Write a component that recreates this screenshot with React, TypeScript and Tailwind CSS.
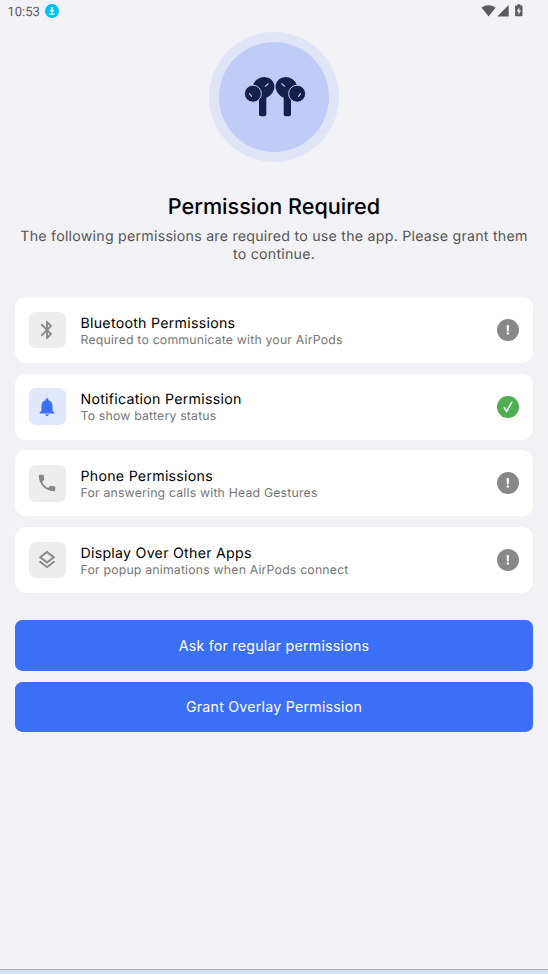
import { MdBluetooth, MdNotifications, MdOutlineLayers, MdPhone } from 'react-icons/md';

const permissions = [
  {
    title: 'Bluetooth Permissions',
    description: 'Required to communicate with your AirPods',
    icon: MdBluetooth,
    granted: false,
  },
  {
    title: 'Notification Permission',
    description: 'To show battery status',
    icon: MdNotifications,
    granted: true,
  },
  {
    title: 'Phone Permissions',
    description: 'For answering calls with Head Gestures',
    icon: MdPhone,
    granted: false,
  },
  {
    title: 'Display Over Other Apps',
    description: 'For popup animations when AirPods connect',
    icon: MdOutlineLayers,
    granted: false,
  },
];

const StatusBar = () => {
  return (
    <div className="flex h-[22px] items-center justify-between pl-[7.5px] pr-6 text-[#5c5c60]">
      <div className="flex items-center gap-[5px]">
        <span className="w-[32.5px] pt-0.5 font-[Roboto] text-[13px] font-normal leading-[21px]">10:53</span>
        <svg className="size-[14px]" viewBox="0 0 14 14">
          <circle cx="7" cy="7" r="7" fill="#00bfff" />
          <path d="M6.2 3h1.6v3.2h1.8L7 9 4.4 6.2h1.8z" fill="#fff" />
          <path d="M4.3 10.1h5.4" stroke="#fff" strokeWidth="1.2" />
        </svg>
      </div>
      <svg className="h-[14px] w-[43px]" viewBox="0 0 43 14" fill="currentColor">
        <path d="M.5 3.6C4.5.3 10.700.3 14.700 3.600L7.600 12.400z" />
        <path d="M27.700 1v11.400H16.200z" />
        <path d="M35.100 1.400h1.200V.2h3v1.200h1.300q.9 0 .9.800v9.200q0 .8-.8.800h-5.800q-.8 0-.8-.8V2.200q0-.8.9-.800z" />
        <path d="M38.300 3.200v3h1.700l-2.500 4.500V7.600h-1.800z" fill="#f2f1f6" />
      </svg>
    </div>
  );
};

const Earbud = () => {
  return (
    <>
      <path d="M14 21h7.300v16.300q0 2-2 2H16q-2 0-2-2z" fill="#13204a" />
      <ellipse cx="18.3" cy="10.8" rx="11.5" ry="10.3" transform="rotate(-35 18.3 10.8)" fill="#13204a" />
      <circle cx="7.9" cy="16.7" r="8.5" fill="#13204a" stroke="#bfccf8" strokeWidth="1" />
      <path d="M20.300 9.200l3-2.400M4.500 16.700l2 2.600" stroke="#bfccf8" strokeWidth="1.1" strokeLinecap="round" />
    </>
  );
};

const StatusBadge = ({ granted }: { granted: boolean }) => {
  return (
    <svg className="size-[22px] shrink-0" viewBox="0 0 22 22">
      <circle cx="11" cy="11" r="11" fill={granted ? '#4caf50' : '#888888'} />
      {granted ? (
        <path d="M7.300 11.600l2.300 4L14.800 6.200" fill="none" stroke="#fff" strokeWidth="1.5" strokeLinecap="round" strokeLinejoin="round" />
      ) : (
        <path d="M9.600 6.200h2.500l-.4 6.400h-1.700zM9.700 13.500h2.300v1.900H9.700z" fill="#fff" />
      )}
    </svg>
  );
};

const App = () => {
  return (
    <div className="flex h-[974px] w-[548px] flex-col bg-[#f2f1f6] font-[Inter,sans-serif] [text-rendering:geometricPrecision]">
      <StatusBar />

      <div className="mt-[9.5px] flex size-[130px] items-center justify-center self-center rounded-full bg-[#dfe4f7]">
        <div className="flex size-[110px] items-center justify-center rounded-full bg-[#bfccf8] pl-0.5">
          <svg className="h-[40px] w-[60px]" viewBox="0 0 60 40" overflow="visible">
            <Earbud />
            <g transform="matrix(-1 0 0 1 60 0)">
              <Earbud />
            </g>
          </svg>
        </div>
      </div>

      <h1 className="mt-[31.5px] text-center text-[21.6px] font-medium leading-7 text-black">Permission Required</h1>
      <p className="mt-[7px] px-[14px] text-center text-[14.2px] leading-[18px] tracking-[0.24px] text-[#555555]">
        The following permissions are required to use the app. Please grant them to continue.
      </p>

      <div className="mt-[33px] flex flex-col gap-[10.8px] px-[14.6px]">
        {permissions.map(({ title, description, icon: Icon, granted }) => (
          <div key={title} className="flex h-[65.9px] items-center rounded-[11px] bg-white px-[14.5px]">
            <div
              className={`flex size-[36.7px] shrink-0 items-center justify-center rounded-[7px] ${
                granted ? 'bg-[#e1e7fe] text-[#3b6ff6]' : 'bg-[#ededed] text-[#888888]'
              }`}
            >
              <Icon size={22} />
            </div>
            <div className="ml-[14.7px] grow pt-[1.5px]">
              <div className="text-[14.2px] leading-[18px] tracking-[0.26px] text-black">{title}</div>
              <div className="-mt-px text-[12.3px] leading-[15px] tracking-[0.18px] text-[#777777]">{description}</div>
            </div>
            <StatusBadge granted={granted} />
          </div>
        ))}
      </div>

      <div className="mt-[27.3px] flex flex-col gap-[11px] px-[14.6px] text-[14.2px] tracking-[0.24px] text-white">
        <button className="h-[50.5px] rounded-[7.3px] bg-[#3b6ff6]">Ask for regular permissions</button>
        <button className="h-[50.5px] rounded-[7.3px] bg-[#3b6ff6] pb-px">Grant Overlay Permission</button>
      </div>

      <div className="mt-auto h-[5px] border-t border-[#adb0bf] bg-[#d5dff1]" />
    </div>
  );
};

export default App;
